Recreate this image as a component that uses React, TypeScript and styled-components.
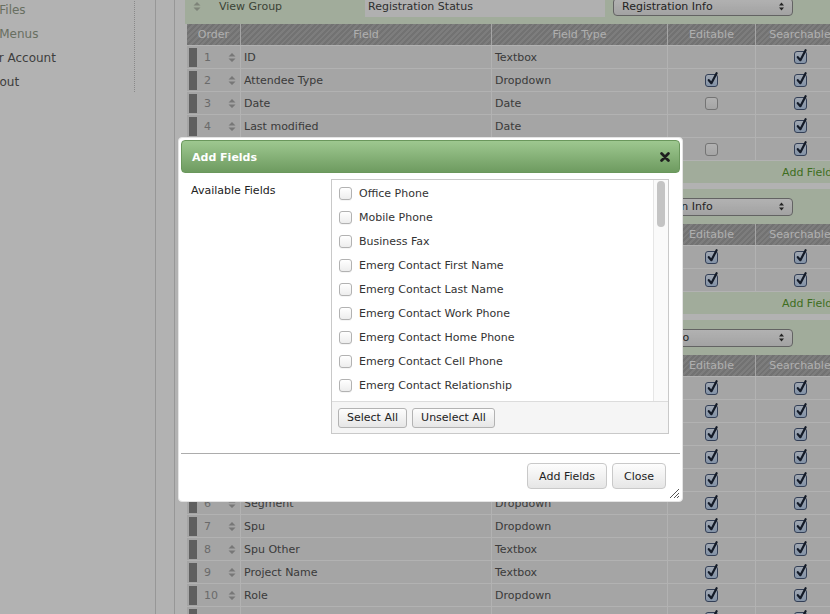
import React from "react";
import styled, { createGlobalStyle } from "styled-components";

const GlobalStyle = createGlobalStyle`
  html, body { margin: 0; padding: 0; background: #fff; overflow: hidden; }
  body {
    font-family: Verdana, "DejaVu Sans", sans-serif;
    font-size: 11px;
    color: #333;
  }
  #root { width: 830px; height: 614px; overflow: hidden; position: relative; }
`;

type Editable = "none" | "on" | "off";
type Field = { name: string; type: string; editable: Editable };
type GroupData = { name: string; section: string; fields: Field[] };

const groups: GroupData[] = [
  {
    name: "Registration Status",
    section: "Registration Info",
    fields: [
      { name: "ID", type: "Textbox", editable: "none" },
      { name: "Attendee Type", type: "Dropdown", editable: "on" },
      { name: "Date", type: "Date", editable: "off" },
      { name: "Last modified", type: "Date", editable: "none" },
      { name: "Status", type: "Dropdown", editable: "off" },
    ],
  },
  {
    name: "Attendee Name",
    section: "Registration Info",
    fields: [
      { name: "First Name", type: "Textbox", editable: "on" },
      { name: "Last Name", type: "Textbox", editable: "on" },
    ],
  },
  {
    name: "Contact",
    section: "Contact Info",
    fields: [
      { name: "Email", type: "Textbox", editable: "on" },
      { name: "Company", type: "Textbox", editable: "on" },
      { name: "Title", type: "Textbox", editable: "on" },
      { name: "Country", type: "Dropdown", editable: "on" },
      { name: "Region", type: "Dropdown", editable: "on" },
      { name: "Segment", type: "Dropdown", editable: "on" },
      { name: "Spu", type: "Dropdown", editable: "on" },
      { name: "Spu Other", type: "Textbox", editable: "on" },
      { name: "Project Name", type: "Textbox", editable: "on" },
      { name: "Role", type: "Dropdown", editable: "on" },
      { name: "Role Other", type: "Textbox", editable: "on" },
    ],
  },
];

// only the first nine fit in the list; the rest sit below the fold
const available = [
  "Office Phone",
  "Mobile Phone",
  "Business Fax",
  "Emerg Contact First Name",
  "Emerg Contact Last Name",
  "Emerg Contact Work Phone",
  "Emerg Contact Home Phone",
  "Emerg Contact Cell Phone",
  "Emerg Contact Relationship",
  "Emerg Contact Email",
  "Address 1",
  "Address 2",
  "City",
];

/* ---------- page behind the dialog ---------- */

const Page = styled.div`
  display: flex;
  align-items: stretch;
  margin: -11px 0 0 -22px;
  min-height: 700px;
`;

const Sidebar = styled.nav`
  flex: none;
  align-self: flex-start;
  width: 157px;
  height: 103px;
  box-sizing: border-box;
  padding-top: 9px;
  border-right: 1px dotted #c4c4c4;
`;

const SideLink = styled.a<{ $sub?: boolean }>`
  display: block;
  height: 24px;
  line-height: 24px;
  font-size: 12px;
  white-space: nowrap;
  color: ${(p) => (p.$sub ? "#95a08c" : "#5a5a5a")};
  text-decoration: none;
`;

const Main = styled.main`
  flex: none;
  margin-left: 20px;
  padding-left: 18px;
  border-left: 1px solid #d9d9d9;
  display: flex;
`;

const Inner = styled.div`
  padding-left: 10px;
  border-left: 1px solid #d9d9d9;
`;

const Content = styled.div`
  width: 665px;
`;

const Group = styled.section`
  margin-bottom: 6px;
`;

const GroupHeader = styled.div`
  display: flex;
  align-items: center;
  height: 35px;
  padding-left: 8px;
  background: #e7f6df;
  color: #56624e;
`;

const GroupLabel = styled.span`
  margin-left: 18px;
  width: 146px;
`;

const NameInput = styled.div`
  width: 240px;
  height: 20px;
  box-sizing: border-box;
  padding-left: 3px;
  display: flex;
  align-items: center;
  background: #fdfdfd;
  color: #444;
`;

const Select = styled.div`
  margin-left: 8px;
  width: 180px;
  height: 18px;
  box-sizing: border-box;
  padding: 0 8px 0 8px;
  display: flex;
  align-items: center;
  justify-content: space-between;
  border: 1px solid #8f8f8f;
  border-radius: 4px;
  background: linear-gradient(#ffffff, #e9e9e9);
  color: #333;
`;

const Table = styled.div`
  margin-left: 2px;
`;

const GridRow = styled.div`
  display: grid;
  grid-template-columns: 54px 251px 176px 88px 89px;
`;

const HeaderRow = styled(GridRow)`
  height: 21px;
  background: repeating-linear-gradient(135deg, #b3b3b3 0 2px, #a4a4a4 2px 4px);
  color: #fbfbfb;
`;

const HeaderCell = styled.div`
  display: flex;
  align-items: center;
  justify-content: center;
  border-right: 1px solid #ececec;
`;

const Row = styled(GridRow)`
  height: 23px;
  box-sizing: border-box;
  border-top: 1px solid #fff;
  background: #ececec;
  color: #555;
`;

const Cell = styled.div<{ $center?: boolean }>`
  display: flex;
  align-items: center;
  justify-content: ${(p) => (p.$center ? "center" : "flex-start")};
  padding-left: ${(p) => (p.$center ? 0 : 3)}px;
  border-right: 1px solid #fff;
  overflow: hidden;
  white-space: nowrap;
`;

const OrderCell = styled.div`
  display: flex;
  align-items: center;
  padding: 0 4px 0 2px;
  border-right: 1px solid #fff;
`;

const Handle = styled.span`
  width: 8px;
  height: 19px;
  background: #888;
`;

const OrderNum = styled.span`
  margin-left: 7px;
  color: #999;
  flex: 1;
`;

const AddRow = styled.div`
  height: 23px;
  box-sizing: border-box;
  border-top: 1px solid #fff;
  display: flex;
  align-items: center;
  justify-content: flex-end;
  padding-right: 12px;
  background: #e7f6df;
  color: #5a9e2f;
`;

const TableBox = styled.span<{ $on: boolean }>`
  position: relative;
  display: inline-block;
  width: 13px;
  height: 13px;
  box-sizing: border-box;
  border-radius: 3px;
  border: 1px solid ${(p) => (p.$on ? "#4a5b7c" : "#a6a6a6")};
  background: ${(p) =>
    p.$on ? "linear-gradient(#e6f0ff, #bcd2ef)" : "linear-gradient(#ffffff, #ececec)"};
  svg {
    position: absolute;
    left: 1px;
    top: -3px;
  }
`;

const SortArrows = ({ color }: { color: string }) => (
  <svg width="8" height="11" viewBox="0 0 8 11" aria-hidden>
    <path d="M0.5 4.5 L4 1 L7.5 4.5 Z M0.5 6.5 L4 10 L7.5 6.5 Z" fill={color} />
  </svg>
);

const SelectArrows = () => (
  <svg width="5" height="9" viewBox="0 0 5 9" aria-hidden>
    <path d="M0 3.5 L2.5 0.5 L5 3.5 Z M0 5.5 L2.5 8.5 L5 5.5 Z" fill="#333" />
  </svg>
);

const TableCheck = ({ on }: { on: boolean }) => (
  <TableBox $on={on}>
    {on && (
      <svg width="11" height="14" viewBox="0 0 11 14" aria-hidden>
        <path
          d="M1.8 8.2 L4.4 11.2 L9.6 1.2"
          fill="none"
          stroke="#1c2638"
          strokeWidth="2.2"
          strokeLinecap="round"
          strokeLinejoin="round"
        />
      </svg>
    )}
  </TableBox>
);

const FieldGroup = ({ group }: { group: GroupData }) => (
  <Group>
    <GroupHeader>
      <SortArrows color="#b3bcac" />
      <GroupLabel>View Group</GroupLabel>
      <NameInput>{group.name}</NameInput>
      <Select>
        <span>{group.section}</span>
        <SelectArrows />
      </Select>
    </GroupHeader>
    <Table>
      <HeaderRow>
        <HeaderCell>Order</HeaderCell>
        <HeaderCell>Field</HeaderCell>
        <HeaderCell>Field Type</HeaderCell>
        <HeaderCell>Editable</HeaderCell>
        <HeaderCell>Searchable</HeaderCell>
      </HeaderRow>
      {group.fields.map((f, i) => (
        <Row key={f.name}>
          <OrderCell>
            <Handle />
            <OrderNum>{i + 1}</OrderNum>
            <SortArrows color="#ababab" />
          </OrderCell>
          <Cell>{f.name}</Cell>
          <Cell>{f.type}</Cell>
          <Cell $center>{f.editable !== "none" && <TableCheck on={f.editable === "on"} />}</Cell>
          <Cell $center>
            <TableCheck on />
          </Cell>
        </Row>
      ))}
    </Table>
    <AddRow>Add Fields</AddRow>
  </Group>
);

/* ---------- dialog ---------- */

const Overlay = styled.div`
  position: fixed;
  inset: 0;
  background: rgba(0, 0, 0, 0.3);
`;

const Dialog = styled.div`
  position: fixed;
  left: 178px;
  top: 137px;
  width: 505px;
  height: 365px;
  box-sizing: border-box;
  padding: 2px;
  display: flex;
  flex-direction: column;
  background: #fff;
  border: 1px solid #e4e4e4;
  border-radius: 4px;
`;

const TitleBar = styled.div`
  flex: none;
  height: 33px;
  box-sizing: border-box;
  padding: 1px 9px 0 10px;
  display: flex;
  align-items: center;
  justify-content: space-between;
  border: 1px solid #6a975c;
  border-radius: 4px;
  background: linear-gradient(#9ec890, #6e9b60);
  color: #fff;
  font-weight: bold;
`;

const CloseIcon = () => (
  <svg width="10" height="10" viewBox="0 0 10 10" aria-hidden>
    <path d="M1.6 1.6 L8.4 8.4 M8.4 1.6 L1.6 8.4" stroke="#1e1e1e" strokeWidth="2.8" strokeLinecap="round" />
  </svg>
);

const DialogBody = styled.div`
  flex: none;
  height: 280px;
  box-sizing: border-box;
  padding: 6px 0 0 10px;
  display: flex;
`;

const FieldLabel = styled.div`
  width: 140px;
  padding-top: 5px;
  line-height: 14px;
  color: #222;
`;

const ListBox = styled.div`
  width: 338px;
  height: 255px;
  box-sizing: border-box;
  border: 1px solid #c9c9c9;
  display: flex;
  flex-direction: column;
`;

const ListBody = styled.div`
  flex: 1;
  min-height: 0;
  display: flex;
  overflow: hidden;
`;

const Items = styled.div`
  flex: 1;
  padding-top: 1px;
`;

const ScrollTrack = styled.div`
  flex: none;
  width: 15px;
  box-sizing: border-box;
  padding: 1px 3px 0 3px;
  background: #fafafa;
  border-left: 1px solid #e6e6e6;
`;

const ScrollThumb = styled.div`
  height: 46px;
  border-radius: 4px;
  background: #c4c4c4;
`;

const Item = styled.label`
  display: flex;
  align-items: center;
  gap: 7px;
  height: 24px;
  padding-left: 7px;
  color: #333;
  white-space: nowrap;
`;

const ItemBox = styled.span`
  width: 13px;
  height: 13px;
  box-sizing: border-box;
  border: 1px solid #b2b2b2;
  border-radius: 3px;
  background: linear-gradient(#ffffff, #ededed);
  box-shadow: 0 1px 0 rgba(0, 0, 0, 0.04);
`;

const ListFooter = styled.div`
  flex: none;
  height: 32px;
  box-sizing: border-box;
  padding-left: 6px;
  display: flex;
  align-items: center;
  gap: 5px;
  background: #f5f5f5;
  border-top: 1px solid #dcdcdc;
`;

const Button = styled.button<{ $small?: boolean }>`
  height: ${(p) => (p.$small ? 20 : 26)}px;
  padding: 0 ${(p) => (p.$small ? 8 : 11)}px;
  font: inherit;
  color: #222;
  border: 1px solid ${(p) => (p.$small ? "#b3b3b3" : "#c9c9c9")};
  border-radius: ${(p) => (p.$small ? 3 : 4)}px;
  background: linear-gradient(#fdfdfd, #e6e6e6);
`;

const ButtonPane = styled.div`
  flex: 1;
  display: flex;
  justify-content: flex-end;
  align-items: flex-start;
  gap: 5px;
  padding: 9px 14px 0 0;
  border-top: 1px solid #acacac;
`;

const Resizer = styled.svg`
  position: absolute;
  right: 2px;
  bottom: 2px;
`;

const AddFieldsDialog = () => (
  <Dialog>
    <TitleBar>
      <span>Add Fields</span>
      <CloseIcon />
    </TitleBar>
    <DialogBody>
      <FieldLabel>Available Fields</FieldLabel>
      <ListBox>
        <ListBody>
          <Items>
            {available.map((name) => (
              <Item key={name}>
                <ItemBox />
                {name}
              </Item>
            ))}
          </Items>
          <ScrollTrack>
            <ScrollThumb />
          </ScrollTrack>
        </ListBody>
        <ListFooter>
          <Button $small>Select All</Button>
          <Button $small>Unselect All</Button>
        </ListFooter>
      </ListBox>
    </DialogBody>
    <ButtonPane>
      <Button>Add Fields</Button>
      <Button>Close</Button>
    </ButtonPane>
    <Resizer width="12" height="12" viewBox="0 0 12 12" aria-hidden>
      <path d="M11 2 L2 11 M11 6 L6 11 M11 9 L9 11" stroke="#555" strokeWidth="1" />
    </Resizer>
  </Dialog>
);

export default function App() {
  return (
    <>
      <GlobalStyle />
      <Page>
        <Sidebar>
          <SideLink $sub>My Files</SideLink>
          <SideLink $sub>My Menus</SideLink>
          <SideLink>Your Account</SideLink>
          <SideLink>Logout</SideLink>
        </Sidebar>
        <Main>
          <Inner>
            <Content>
              {groups.map((g) => (
                <FieldGroup key={g.name} group={g} />
              ))}
            </Content>
          </Inner>
        </Main>
      </Page>
      <Overlay />
      <AddFieldsDialog />
    </>
  );
}
